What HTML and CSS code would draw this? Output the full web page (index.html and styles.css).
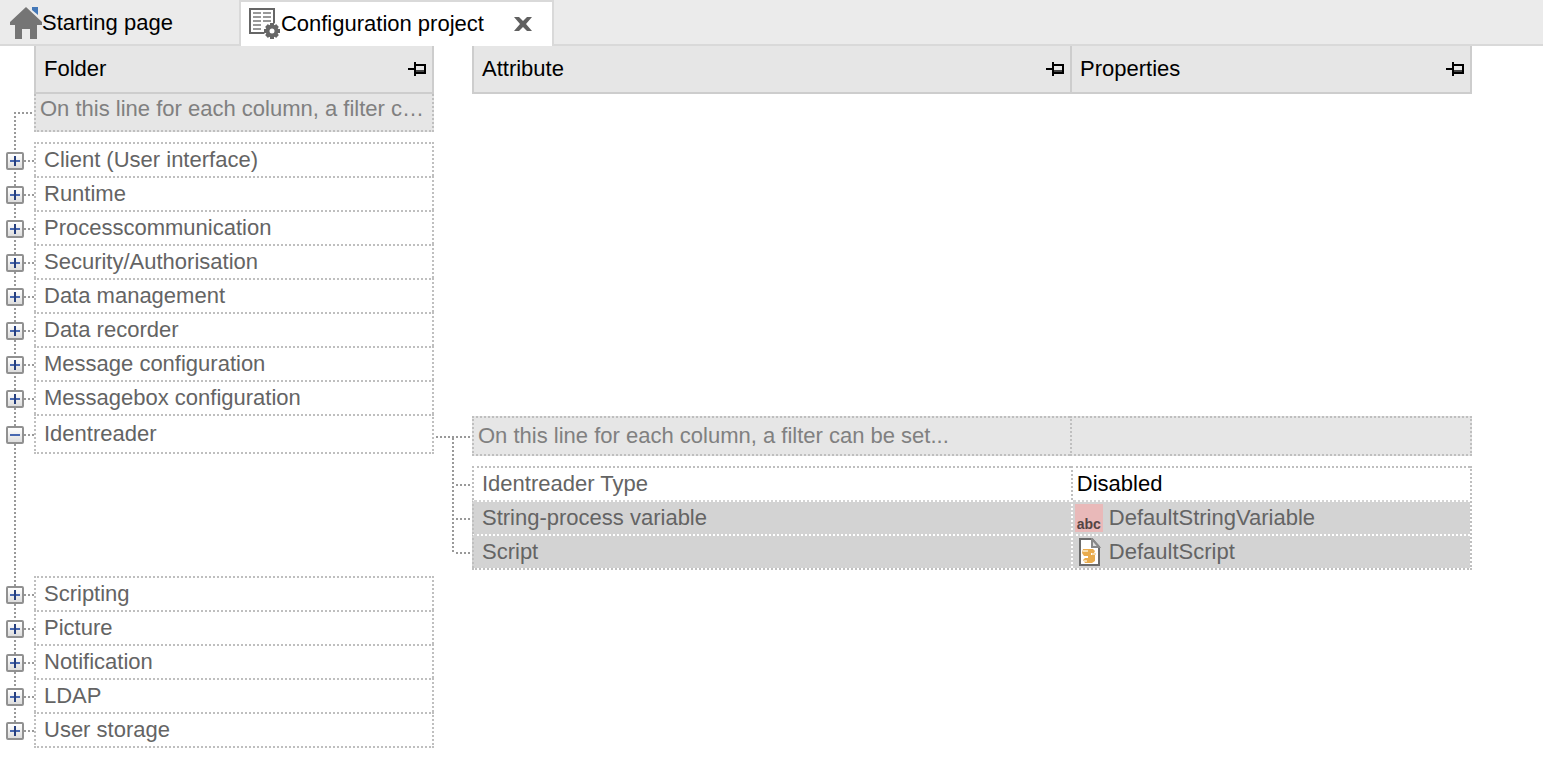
FILE: index.html
```html
<!DOCTYPE html>
<html lang="en">
<head>
    <meta charset="UTF-8">
    <meta name="viewport" content="width=device-width, initial-scale=1.0">
    <title>Configuration project</title>
    <link rel="stylesheet" href="styles.css">
</head>
<body>

<!-- Shared icons -->
<svg class="icon-defs" width="0" height="0" aria-hidden="true">
    <symbol id="pin" viewBox="0 0 18 14">
        <path d="M0 6h6v2H0zM6 0h2v14H6zM8 2h10v10H8z" fill="#000"/>
        <path d="M8 4h8v4H8z" fill="#e6e6e6"/>
        <path d="M8 8h8v2H8z" fill="#444"/>
    </symbol>
    <symbol id="plus" viewBox="0 0 10 10">
        <path d="M0 4h10v2H0z" fill="#4868b0"/>
        <path d="M4 0h2v10H4z" fill="#263f7e"/>
    </symbol>
    <symbol id="minus" viewBox="0 0 10 10">
        <path d="M0 4h10v2H0z" fill="#4868b0"/>
    </symbol>
</svg>

<nav class="tabs">
    <div class="tab">
        <svg width="32" height="32" viewBox="0 0 32 32" aria-hidden="true">
            <path d="M22 0h6v8l-6-5z" fill="#4478b8"/>
            <path d="M16 0 32 15v3h-5v14h-7V22h-8v10H5V18H0v-3z" fill="#757575"/>
        </svg>
        <button type="button">Starting page</button>
    </div>
    <div class="tab active">
        <svg width="32" height="32" viewBox="0 0 32 32" aria-hidden="true">
            <path d="M1 1h24v24H1z" fill="#fff" stroke="#666" stroke-width="2"/>
            <path d="M4 5h8M14 5h8M4 9h8M14 9h8M4 13h8M14 13h8M4 17h8M4 21h8" stroke="#999" stroke-width="2"/>
            <circle cx="23" cy="23" r="8" fill="#fff"/>
            <path d="M23 15v16M15 23h16M17.500 17.500l11 11M28.500 17.500l-11 11" stroke="#666" stroke-width="4"/>
            <circle cx="23" cy="23" r="4.500" fill="#fff" stroke="#666" stroke-width="4"/>
        </svg>
        <button type="button">Configuration project</button>
        <button type="button" class="close" aria-label="Close tab">
            <svg width="18" height="14" viewBox="0 0 18 14" aria-hidden="true">
                <path d="M0 0h5l4 4 4-4h5l-6 7 6 7h-5l-4-4-4 4H0l6-7z" fill="#606060"/>
            </svg>
        </button>
    </div>
</nav>

<main>
    <div class="columns header">
        <div class="head folder">Folder <svg width="18" height="14" aria-hidden="true"><use href="#pin"/></svg></div>
        <div class="head attribute">Attribute <svg width="18" height="14" aria-hidden="true"><use href="#pin"/></svg></div>
        <div class="head properties">Properties <svg width="18" height="14" aria-hidden="true"><use href="#pin"/></svg></div>
    </div>

    <div class="tree">
        <div class="columns filter-row">
            <span class="gutter"></span>
            <input class="filter" type="text" aria-label="Folder filter" placeholder="On this line for each column, a filter can be set...">
        </div>

        <ul class="folders">
            <li class="columns">
                <span class="gutter"><button class="toggle" aria-label="Expand Client"><svg width="10" height="10"><use href="#plus"/></svg></button></span>
                <span class="name">Client (User interface)</span>
            </li>
            <li class="columns">
                <span class="gutter"><button class="toggle" aria-label="Expand Runtime"><svg width="10" height="10"><use href="#plus"/></svg></button></span>
                <span class="name">Runtime</span>
            </li>
            <li class="columns">
                <span class="gutter"><button class="toggle" aria-label="Expand Processcommunication"><svg width="10" height="10"><use href="#plus"/></svg></button></span>
                <span class="name">Processcommunication</span>
            </li>
            <li class="columns">
                <span class="gutter"><button class="toggle" aria-label="Expand Security/Authorisation"><svg width="10" height="10"><use href="#plus"/></svg></button></span>
                <span class="name">Security/Authorisation</span>
            </li>
            <li class="columns">
                <span class="gutter"><button class="toggle" aria-label="Expand Data management"><svg width="10" height="10"><use href="#plus"/></svg></button></span>
                <span class="name">Data management</span>
            </li>
            <li class="columns">
                <span class="gutter"><button class="toggle" aria-label="Expand Data recorder"><svg width="10" height="10"><use href="#plus"/></svg></button></span>
                <span class="name">Data recorder</span>
            </li>
            <li class="columns">
                <span class="gutter"><button class="toggle" aria-label="Expand Message configuration"><svg width="10" height="10"><use href="#plus"/></svg></button></span>
                <span class="name">Message configuration</span>
            </li>
            <li class="columns">
                <span class="gutter"><button class="toggle" aria-label="Expand Messagebox configuration"><svg width="10" height="10"><use href="#plus"/></svg></button></span>
                <span class="name">Messagebox configuration</span>
            </li>
            <li class="columns open">
                <span class="gutter"><button class="toggle" aria-label="Collapse Identreader"><svg width="10" height="10"><use href="#minus"/></svg></button></span>
                <span class="name">Identreader</span>
                <svg class="branch" width="38" height="156" viewBox="0 0 38 156" aria-hidden="true">
                    <path d="M2 23h34M19 24v116M22 71h14M22 105h14M22 139h14" fill="none" stroke="#999" stroke-width="2" stroke-dasharray="2 2"/>
                </svg>
                <div class="details">
                    <div class="detail-filter">
                        <input class="filter" type="text" aria-label="Attribute filter" placeholder="On this line for each column, a filter can be set...">
                        <input class="filter" type="text" aria-label="Properties filter">
                    </div>
                    <table>
                        <tr>
                            <td>Identreader Type</td>
                            <td class="value">Disabled</td>
                        </tr>
                        <tr class="inactive">
                            <td>String-process variable</td>
                            <td class="value">
                                <div class="item">
                                    <span class="abc" aria-hidden="true">abc</span>
                                    DefaultStringVariable
                                </div>
                            </td>
                        </tr>
                        <tr class="inactive">
                            <td>Script</td>
                            <td class="value">
                                <div class="item">
                                    <svg width="28" height="28" viewBox="0 0 28 28" aria-hidden="true">
                                        <path d="M5 1h12l7 8v18H5z" fill="#fff" stroke="#6b6b6b" stroke-width="2"/>
                                        <path d="M17 1v8h7z" fill="#ddd" stroke="#888" stroke-width="2"/>
                                        <path d="M8 11h10l2 2-1 2h-3v2h4v6l-3 2h-7l-2-3 2-2h3v-2h-4l-2-3z" fill="#e9ac4e"/>
                                        <path d="M8 13h5M9 23h3M17 16h4" stroke="#f6dcae" stroke-width="2"/>
                                    </svg>
                                    DefaultScript
                                </div>
                            </td>
                        </tr>
                    </table>
                </div>
            </li>
            <li class="columns">
                <span class="gutter"><button class="toggle" aria-label="Expand Scripting"><svg width="10" height="10"><use href="#plus"/></svg></button></span>
                <span class="name">Scripting</span>
            </li>
            <li class="columns">
                <span class="gutter"><button class="toggle" aria-label="Expand Picture"><svg width="10" height="10"><use href="#plus"/></svg></button></span>
                <span class="name">Picture</span>
            </li>
            <li class="columns">
                <span class="gutter"><button class="toggle" aria-label="Expand Notification"><svg width="10" height="10"><use href="#plus"/></svg></button></span>
                <span class="name">Notification</span>
            </li>
            <li class="columns">
                <span class="gutter"><button class="toggle" aria-label="Expand LDAP"><svg width="10" height="10"><use href="#plus"/></svg></button></span>
                <span class="name">LDAP</span>
            </li>
            <li class="columns">
                <span class="gutter"><button class="toggle" aria-label="Expand User storage"><svg width="10" height="10"><use href="#plus"/></svg></button></span>
                <span class="name">User storage</span>
            </li>
        </ul>
    </div>
</main>

</body>
</html>
```
FILE: styles.css
```css
* {
    box-sizing: border-box;
}

body {
    margin: 0;
    background-color: #fff;
    color: #000;
    font-family: "Liberation Sans", Arial, sans-serif;
    font-size: 22px;
    line-height: 32px;
}

button, input {
    font: inherit;
    color: inherit;
    padding: 0;
    border: none;
    background: none;
}

svg {
    display: block;
    flex: none;
}

.icon-defs {
    position: absolute;
}

/* Tab bar */
.tabs {
    display: flex;
    height: 46px;
    background-color: #ebebeb;
    box-shadow: inset 0 -2px #d9d9d9;
}

.tab {
    display: flex;
    align-items: center;
    padding: 0 66px 0 10px;
    white-space: nowrap;
}

.tab.active {
    padding: 0 20px 0 8px;
    background-color: #fff;
    border: 2px solid #d9d9d9;
    border-bottom: none;
}

.close {
    margin-left: 30px;
}

/* Column layout shared by the header and every row */
.columns {
    display: grid;
    grid-template-columns: 34px 400fr 38px 598fr 402fr 71px;
}

.head {
    display: flex;
    align-items: center;
    justify-content: space-between;
    height: 48px;
    padding: 0 6px 0 8px;
    background-color: #e6e6e6;
    border: 2px solid #cdcdcd;
    border-top: none;
}

.folder {
    grid-column: 2;
}

.attribute {
    grid-column: 4;
    border-right: none;
}

.properties {
    grid-column: 5;
}

/* Tree */
.tree {
    color: #646464;
    background: repeating-linear-gradient(#999 0 2px, transparent 2px 4px) 14px 18px / 2px calc(100% - 27px) no-repeat;
}

.folders {
    margin: 10px 0 0;
    padding: 0;
    list-style: none;
}

.gutter {
    display: flex;
    align-items: center;
    height: 38px;
    padding-left: 6px;
    background: repeating-linear-gradient(90deg, #999 0 2px, transparent 2px 4px) right center / 10px 2px no-repeat;
}

.filter-row .gutter {
    background-size: 20px 2px;
}

.toggle {
    display: flex;
    align-items: center;
    justify-content: center;
    width: 18px;
    height: 18px;
    border: 2px solid #919191;
    border-radius: 2px;
    background: linear-gradient(#fff, #ddd);
}

.name {
    height: 34px;
    padding-left: 8px;
    border: 2px dotted #bfbfbf;
    border-bottom: none;
}

.folders li:last-child .name {
    height: 36px;
    border-bottom: 2px dotted #bfbfbf;
}

.folders .gutter {
    height: 38px;
    margin-bottom: -4px;
}

.filter {
    min-width: 0;
    width: 100%;
    height: 38px;
    padding: 0 8px 6px 4px;
    background-color: #e6e6e6;
    border: 2px dotted #bfbfbf;
    border-top: none;
    border-radius: 0;
    text-overflow: ellipsis;
}

.filter::placeholder {
    color: #808080;
    opacity: 1;
}

/* Expanded folder */
.open {
    padding-bottom: 6px;
}

.open .name {
    height: 40px;
    padding-top: 2px;
    border-bottom: 2px dotted #bfbfbf;
}

.folders .open .gutter {
    height: 42px;
}

.details {
    grid-column: 4 / 6;
    padding-top: 2px;
}

.detail-filter {
    display: grid;
    grid-template-columns: 598fr 402fr;
    margin-bottom: 10px;
}

.detail-filter .filter {
    height: 40px;
    padding-bottom: 0;
    border-top: 2px dotted #bfbfbf;
}

.detail-filter .filter:first-child {
    border-right: none;
}

table {
    width: 100%;
    table-layout: fixed;
    border-spacing: 0;
    border-right: 2px dotted #bfbfbf;
    border-bottom: 2px dotted #bfbfbf;
}

td {
    height: 34px;
    padding: 0 0 0 8px;
    border-top: 2px dotted #bfbfbf;
    border-left: 2px dotted #bfbfbf;
}

td:first-child {
    width: 60%;
}

td.value {
    padding-left: 4px;
    color: #000;
}

.inactive td {
    background-color: #d3d3d3;
    border-top-color: #fff;
}

.inactive td.value {
    padding-left: 2px;
    color: #646464;
    border-left-color: #fff;
}

.item {
    display: flex;
    align-items: center;
    gap: 6px;
}

.abc {
    display: flex;
    align-items: flex-end;
    justify-content: center;
    width: 28px;
    height: 28px;
    background-color: #e9b9b9;
    color: #554444;
    font-size: 14px;
    font-weight: 900;
    line-height: 16px;
}
```
